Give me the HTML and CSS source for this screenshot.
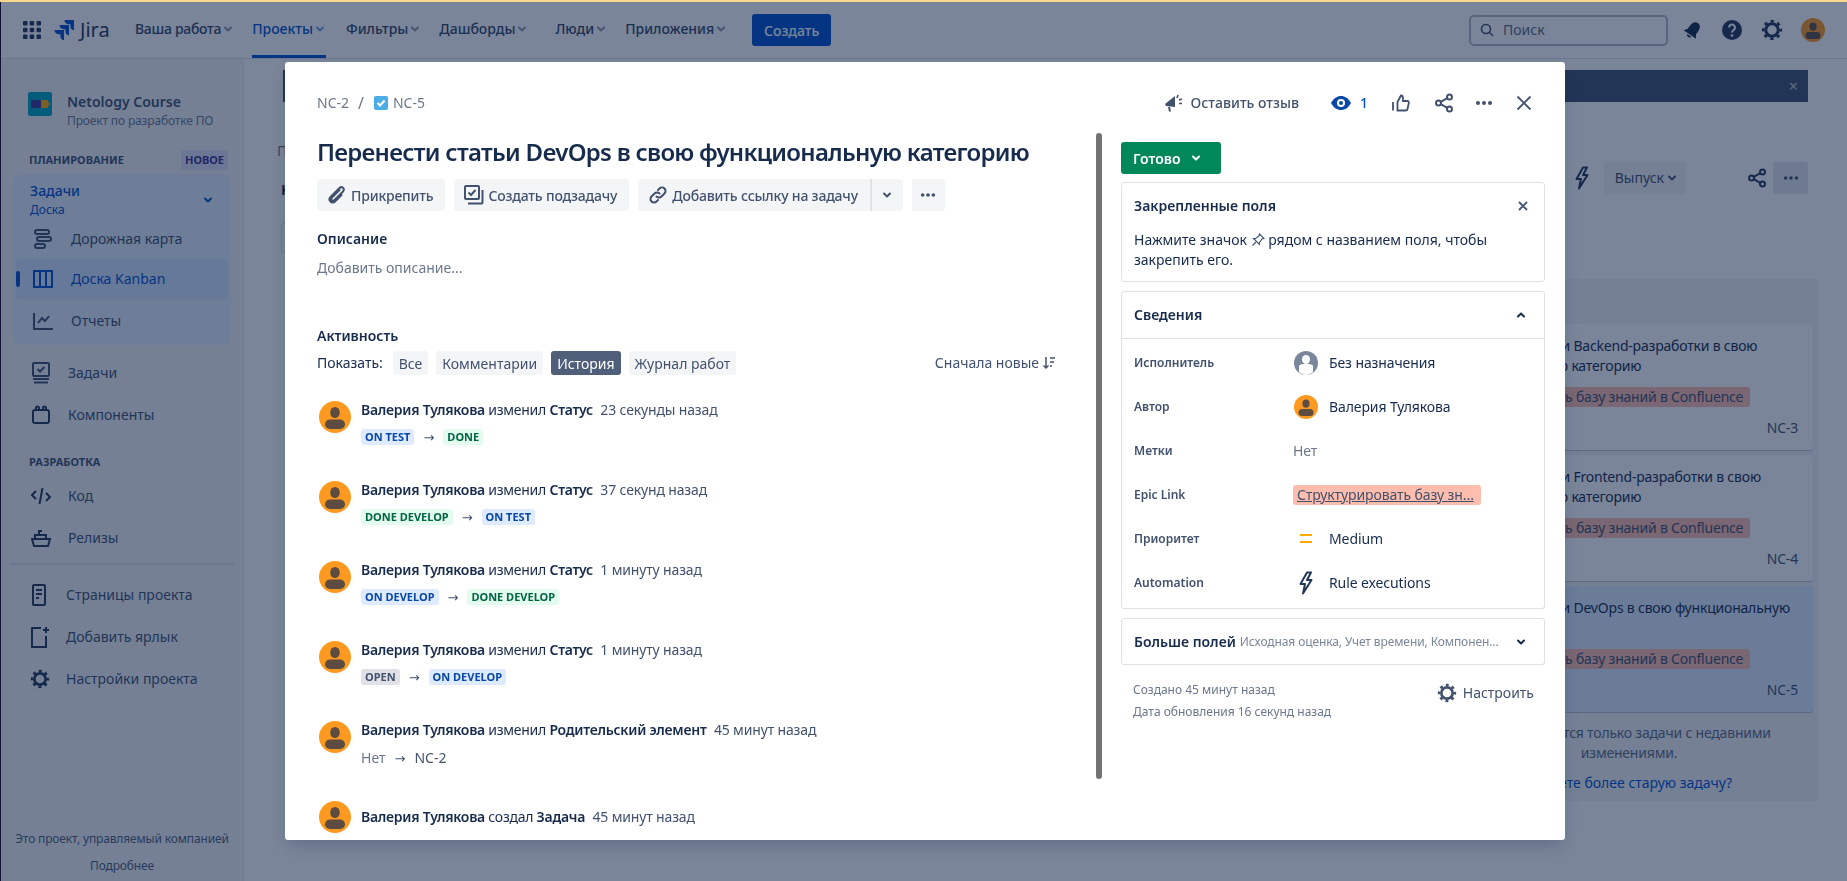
FILE: index.html
```html
<!DOCTYPE html>
<html lang="ru">
<head>
  <meta charset="UTF-8" />
  <title>NC-5 - Jira</title>
  <link rel="stylesheet" href="styles.css">
</head>
<body>
  <svg class="defs" width="0" height="0">
    <symbol id="chev" viewBox="0 0 12 12"><path d="M3 4.500 6 7.500 9 4.500" fill="none" stroke="currentColor" stroke-width="2" stroke-linecap="round" stroke-linejoin="round"/></symbol>
    <symbol id="gear" viewBox="0 0 24 24"><g fill="none" stroke="currentColor"><circle cx="12" cy="12" r="6.800" stroke-width="3.200"/><circle cx="12" cy="12" r="9.500" stroke-width="3" stroke-dasharray="3.500 3.960" stroke-dashoffset="1.750"/></g></symbol>
    <symbol id="share" viewBox="0 0 20 20"><g fill="none" stroke="currentColor" stroke-width="2"><circle cx="4.500" cy="10" r="2.500"/><circle cx="15.500" cy="4" r="2.500"/><circle cx="15.500" cy="16" r="2.500"/><path d="M6.800 8.800 13.200 5.200M6.800 11.200 13.200 14.800"/></g></symbol>
    <symbol id="dots" viewBox="0 0 20 20"><g fill="currentColor"><circle cx="4" cy="10" r="2"/><circle cx="10" cy="10" r="2"/><circle cx="16" cy="10" r="2"/></g></symbol>
    <symbol id="bolt" viewBox="0 0 20 24"><path d="M11 1.500 4.500 13H9L7 22.500 15.500 9H11L15 1.500Z" fill="none" stroke="currentColor" stroke-width="2" stroke-linejoin="round"/></symbol>
    <symbol id="ava" viewBox="0 0 32 32"><circle cx="16" cy="16" r="16" fill="#ff991f"/><ellipse cx="16" cy="11.500" rx="4.800" ry="5.500" fill="#5d4c42"/><rect x="6" y="18.500" width="20" height="9.500" rx="4.700" fill="#5d4c42"/></symbol>
  </svg>

  <header class="topbar">
    <svg class="tb-grid" width="18" height="18" viewBox="0 0 18 18" fill="#253858"><rect width="4.500" height="4.500" rx="1"/><rect x="6.700" width="4.500" height="4.500" rx="1"/><rect x="13.500" width="4.500" height="4.500" rx="1"/><rect y="6.700" width="4.500" height="4.500" rx="1"/><rect x="6.700" y="6.700" width="4.500" height="4.500" rx="1"/><rect x="13.500" y="6.700" width="4.500" height="4.500" rx="1"/><rect y="13.500" width="4.500" height="4.500" rx="1"/><rect x="6.700" y="13.500" width="4.500" height="4.500" rx="1"/><rect x="13.500" y="13.500" width="4.500" height="4.500" rx="1"/></svg>
    <div class="logo">
      <svg width="20" height="20" viewBox="0 0 20 20" fill="#0052cc"><path d="M20 0H10.500a4.300 4.300 0 0 0 4.300 4.300h1.600v1.600A4.300 4.300 0 0 0 20 10.200V0Z"/><path d="M15 5H5.500a4.300 4.300 0 0 0 4.300 4.300h1.600v1.600a4.300 4.300 0 0 0 3.600 4.300V5Z"/><path d="M10 10H0.500a4.300 4.300 0 0 0 4.300 4.300h1.600v1.600A4.300 4.300 0 0 0 10 20.200V10Z"/></svg>
      <span>Jira</span>
    </div>
    <nav class="tb-nav">
      <a class="tb-link">Ваша работа<svg width="12" height="12"><use href="#chev"/></svg></a>
      <a class="tb-link active">Проекты<svg width="12" height="12"><use href="#chev"/></svg></a>
      <a class="tb-link">Фильтры<svg width="12" height="12"><use href="#chev"/></svg></a>
      <a class="tb-link">Дашборды<svg width="12" height="12"><use href="#chev"/></svg></a>
      <a class="tb-link">Люди<svg width="12" height="12"><use href="#chev"/></svg></a>
      <a class="tb-link">Приложения<svg width="12" height="12"><use href="#chev"/></svg></a>
    </nav>
    <button class="create">Создать</button>
    <div class="tb-right">
      <div class="search">
        <svg width="14" height="14" viewBox="0 0 14 14" fill="none" stroke="#42526e" stroke-width="1.600"><circle cx="6" cy="6" r="4.500"/><path d="M9.500 9.500 13 13"/></svg>
        <span>Поиск</span>
      </div>
      <svg class="tb-ico" width="20" height="20" viewBox="0 0 20 20" fill="#172b4d"><g transform="rotate(35 10 10)"><path d="M10 1.500C6.500 1.500 5 4.500 5 8V12L2.500 15.500H17.500L15 12V8C15 4.500 13.500 1.500 10 1.500Z"/><path d="M7.500 16.500H12.500C12.500 19 7.500 19 7.500 16.500Z"/></g></svg>
      <svg class="tb-ico" width="22" height="22" viewBox="0 0 22 22"><circle cx="11" cy="11" r="10" fill="#253858"/><path d="M8 8.500a3 3 0 1 1 4.800 2.400c-1.200.9-1.800 1.300-1.800 2.600" fill="none" stroke="#fff" stroke-width="2"/><circle cx="11" cy="16.500" r="1.300" fill="#fff"/></svg>
      <svg class="tb-ico" width="22" height="22" color="#253858"><use href="#gear"/></svg>
      <svg class="tb-ava" width="24" height="24"><use href="#ava"/></svg>
    </div>
  </header>

  <div class="page">
    <aside class="sidebar">
      <div class="project">
        <svg width="24" height="24" viewBox="0 0 24 24"><rect width="24" height="24" rx="2" fill="#00a3bf"/><rect x="3" y="8" width="10" height="8" rx="1" fill="#403294"/><rect x="13" y="8" width="7" height="8" rx="1" fill="#ffab00"/><rect x="20" y="10.500" width="1.500" height="3" fill="#ffab00"/></svg>
        <div>
          <div class="project-name">Netology Course</div>
          <div class="project-type">Проект по разработке ПО</div>
        </div>
      </div>
      <div class="side-head">
        <span>ПЛАНИРОВАНИЕ</span><span class="badge-new">НОВОЕ</span>
      </div>
      <div class="side-group">
        <div class="group-top">
          <div>
            <div class="group-title">Задачи</div>
            <div class="group-sub">Доска</div>
          </div>
          <svg width="12" height="12"><use href="#chev"/></svg>
        </div>
        <a class="side-item sub">
          <svg width="20" height="22" viewBox="0 0 20 22" fill="none" stroke="#42526e" stroke-width="2"><rect x="2" y="2" width="14" height="4" rx="2"/><rect x="4" y="9" width="14" height="4" rx="2"/><rect x="2" y="16" width="10" height="4" rx="2"/></svg>
          <span>Дорожная карта</span>
        </a>
        <a class="side-item sub selected">
          <svg width="20" height="18" viewBox="0 0 20 18" fill="none" stroke="#0052cc" stroke-width="2"><rect x="1" y="1" width="18" height="16"/><path d="M7 1V17M13 1V17"/></svg>
          <span>Доска Kanban</span>
        </a>
        <a class="side-item sub">
          <svg width="20" height="18" viewBox="0 0 20 18" fill="none" stroke="#42526e" stroke-width="2"><path d="M1 1V17H20"/><path d="M5 11 9 6 12 9 16 4"/></svg>
          <span>Отчеты</span>
        </a>
      </div>
      <a class="side-item">
        <svg width="20" height="22" viewBox="0 0 20 22" fill="none" stroke="#42526e" stroke-width="2"><rect x="2" y="1" width="16" height="13" rx="1"/><path d="M6.500 7 9 9.500 13.500 5M2 17H18M3 20.500H17"/></svg>
        <span>Задачи</span>
      </a>
      <a class="side-item">
        <svg width="20" height="20" viewBox="0 0 20 20" fill="none" stroke="#253858" stroke-width="2"><rect x="2" y="5" width="16" height="13" rx="2"/><path d="M5 5V3a1 1 0 0 1 3 0V5M12 5V3a1 1 0 0 1 3 0V5"/></svg>
        <span>Компоненты</span>
      </a>
      <div class="side-head dev">РАЗРАБОТКА</div>
      <a class="side-item">
        <svg width="20" height="20" viewBox="0 0 20 20" fill="none" stroke="#253858" stroke-width="2"><path d="M5 5 1 9 5 13M15 7 19 11 15 15M11.500 2 8.500 18"/></svg>
        <span>Код</span>
      </a>
      <a class="side-item">
        <svg width="20" height="20" viewBox="0 0 20 20" fill="none" stroke="#253858" stroke-width="2"><path d="M1 11H19L17 18H3ZM4 11V7H15V11M8 7V3H11"/></svg>
        <span>Релизы</span>
      </a>
      <div class="side-sep"></div>
      <a class="side-item bottom">
        <svg width="20" height="22" viewBox="-2 0 20 22" fill="none" stroke="#253858" stroke-width="2"><rect x="1" y="1" width="12" height="20" rx="1"/><path d="M4 6H10M4 10H10M4 14H7"/></svg>
        <span>Страницы проекта</span>
      </a>
      <a class="side-item bottom">
        <svg width="20" height="22" viewBox="0 0 20 22" fill="none" stroke="#253858" stroke-width="2"><path d="M11 2H2V21H16V10"/><path d="M16 1V7M13 4H19"/></svg>
        <span>Добавить ярлык</span>
      </a>
      <a class="side-item bottom">
        <svg width="20" height="22" color="#253858"><use href="#gear"/></svg>
        <span>Настройки проекта</span>
      </a>
      <div class="side-foot">
        <div>Это проект, управляемый компанией</div>
        <div class="foot-more">Подробнее</div>
      </div>
    </aside>

    <main class="board">
      <div class="banner"><span>&times;</span></div>
      <div class="crumbs">Проекты</div>
      <div class="toolbar">
        <h1 class="board-title">Kanban</h1>
        <div class="toolbar-right">
          <svg width="20" height="24" color="#253858"><use href="#bolt"/></svg>
          <span class="release">Выпуск<svg width="12" height="12"><use href="#chev"/></svg></span>
          <svg class="board-share" width="20" height="20" color="#253858"><use href="#share"/></svg>
          <span class="board-more"><svg width="18" height="18"><use href="#dots"/></svg></span>
        </div>
      </div>
      <div class="filter-input"></div>
      <section class="column">
        <article class="card">
          <p>Перенести статьи Backend-разработки в свою функциональную категорию</p>
          <span class="epic">Структурировать базу знаний в Confluence</span>
          <div class="card-key">NC-3</div>
        </article>
        <article class="card">
          <p>Перенести статьи Frontend-разработки в свою функциональную категорию</p>
          <span class="epic">Структурировать базу знаний в Confluence</span>
          <div class="card-key">NC-4</div>
        </article>
        <article class="card current">
          <p>Перенести статьи DevOps в свою функциональную<br>категорию</p>
          <span class="epic">Структурировать базу знаний в Confluence</span>
          <div class="card-key">NC-5</div>
        </article>
        <div class="col-note">Показываются только задачи с недавними изменениями.</div>
        <a class="col-link">Ищете более старую задачу?</a>
      </section>
    </main>
  </div>

  <div class="blanket"></div>

  <div class="modal">
    <div class="modal-head">
      <div class="breadcrumb">
        <span>NC-2</span><span class="slash">/</span>
        <svg width="16" height="16" viewBox="0 0 16 16"><rect x="1" y="1" width="14" height="14" rx="2" fill="#4bade8"/><path d="M4.500 8 7 10.500 11.500 5.500" fill="none" stroke="#fff" stroke-width="2"/></svg>
        <span>NC-5</span>
      </div>
      <div class="head-actions">
        <span class="feedback">
          <svg width="20" height="20" viewBox="0 0 20 20" fill="#42526e"><path d="M1 11 11 3V14L2 13Z"/><path d="M5 14 6 18.500" stroke="#42526e" stroke-width="2"/><path d="M14 2 13 5M15 7 18 6M15 10.500 18 10.500" stroke="#42526e" stroke-width="1.600"/></svg>
          Оставить отзыв
        </span>
        <span class="watch">
          <svg width="20" height="14" viewBox="0 0 20 14"><path d="M0 7C3 2 6 0 10 0S17 2 20 7C17 12 14 14 10 14S3 12 0 7Z" fill="#0747a6"/><circle cx="10" cy="7" r="4" fill="#fff"/><circle cx="10" cy="7" r="2" fill="#0747a6"/></svg>
          <b>1</b>
        </span>
        <svg class="act-like" width="18" height="18" viewBox="0 0 18 18" fill="none" stroke="#42526e" stroke-width="1.800"><path d="M5.500 8 9 1.500C10.500 1.500 11 3 11 4.500V7H15.500C16.500 7 17 8 16.800 9L15.500 15C15.300 16 14.500 16.500 13.500 16.500H5.500ZM1 8V16.500"/></svg>
        <svg class="act-share" width="20" height="20" color="#42526e"><use href="#share"/></svg>
        <svg class="act-more" width="20" height="20" color="#42526e"><use href="#dots"/></svg>
        <svg class="act-close" width="16" height="16" viewBox="0 0 16 16" stroke="#42526e" stroke-width="1.800"><path d="M1.500 1.500 14.500 14.500M14.500 1.500 1.500 14.500"/></svg>
      </div>
    </div>

    <div class="modal-body">
      <div class="issue">
        <h1 class="issue-title">Перенести статьи DevOps в свою функциональную категорию</h1>
        <div class="issue-actions">
          <button class="btn">
            <svg width="20" height="20" viewBox="0 0 20 20" fill="none" stroke="#42526e" stroke-width="2" stroke-linecap="round"><path d="M12.500 5 5 12.500C3 14.500 5.500 17 7.500 15L16 6.500C18.500 4 15 0.500 12.500 3L3.500 12C0.500 15 5 19.500 8 16.500L14.500 10"/></svg>
            Прикрепить
          </button>
          <button class="btn">
            <svg width="20" height="20" viewBox="0 0 20 20" fill="none" stroke="#42526e" stroke-width="2"><rect x="1" y="1" width="14" height="13" rx="1"/><path d="M4.500 7.500 7 10 11.500 5"/><path d="M18.500 5V17.500a1 1 0 0 1-1 1H4"/></svg>
            Создать подзадачу
          </button>
          <div class="btn-split">
            <button class="btn">
              <svg width="20" height="20" viewBox="0 0 20 20" fill="none" stroke="#42526e" stroke-width="2" stroke-linecap="round"><path d="M8.500 11.500a3.500 3.500 0 0 0 5 0l3-3a3.500 3.500 0 0 0-5-5l-1.500 1.500"/><path d="M11.500 8.500a3.500 3.500 0 0 0-5 0l-3 3a3.500 3.500 0 0 0 5 5l1.500-1.500"/></svg>
              Добавить ссылку на задачу
            </button>
            <button class="btn btn-caret"><svg width="12" height="12"><use href="#chev"/></svg></button>
          </div>
          <button class="btn btn-more"><svg width="18" height="18"><use href="#dots"/></svg></button>
        </div>

        <h2 class="sec-title">Описание</h2>
        <p class="placeholder">Добавить описание...</p>

        <h2 class="sec-title activity">Активность</h2>
        <div class="activity-bar">
          <span class="show-label">Показать:</span>
          <button class="chip">Все</button>
          <button class="chip">Комментарии</button>
          <button class="chip on">История</button>
          <button class="chip">Журнал работ</button>
          <span class="sort">Сначала новые
            <svg width="14" height="14" viewBox="0 0 14 14" fill="none" stroke="#42526e" stroke-width="1.500"><path d="M4 1V12M1.500 9.500 4 12 6.500 9.500M8 2H13M8 6H12M8 10H10"/></svg>
          </span>
        </div>

        <div class="entry">
          <svg class="entry-ava" width="32" height="32"><use href="#ava"/></svg>
          <div>
            <div class="entry-line"><b>Валерия Тулякова</b> изменил <b>Статус</b> <time>23 секунды назад</time></div>
            <div class="entry-change"><span class="loz blue">ON TEST</span><i>→</i><span class="loz green">DONE</span></div>
          </div>
        </div>
        <div class="entry">
          <svg class="entry-ava" width="32" height="32"><use href="#ava"/></svg>
          <div>
            <div class="entry-line"><b>Валерия Тулякова</b> изменил <b>Статус</b> <time>37 секунд назад</time></div>
            <div class="entry-change"><span class="loz green">DONE DEVELOP</span><i>→</i><span class="loz blue">ON TEST</span></div>
          </div>
        </div>
        <div class="entry">
          <svg class="entry-ava" width="32" height="32"><use href="#ava"/></svg>
          <div>
            <div class="entry-line"><b>Валерия Тулякова</b> изменил <b>Статус</b> <time>1 минуту назад</time></div>
            <div class="entry-change"><span class="loz blue">ON DEVELOP</span><i>→</i><span class="loz green">DONE DEVELOP</span></div>
          </div>
        </div>
        <div class="entry">
          <svg class="entry-ava" width="32" height="32"><use href="#ava"/></svg>
          <div>
            <div class="entry-line"><b>Валерия Тулякова</b> изменил <b>Статус</b> <time>1 минуту назад</time></div>
            <div class="entry-change"><span class="loz gray">OPEN</span><i>→</i><span class="loz blue">ON DEVELOP</span></div>
          </div>
        </div>
        <div class="entry">
          <svg class="entry-ava" width="32" height="32"><use href="#ava"/></svg>
          <div>
            <div class="entry-line"><b>Валерия Тулякова</b> изменил <b>Родительский элемент</b> <time>45 минут назад</time></div>
            <div class="entry-change plain"><span class="none">Нет</span><i>→</i><span>NC-2</span></div>
          </div>
        </div>
        <div class="entry">
          <svg class="entry-ava" width="32" height="32"><use href="#ava"/></svg>
          <div>
            <div class="entry-line last"><b>Валерия Тулякова</b> создал <b>Задача</b> <time>45 минут назад</time></div>
          </div>
        </div>
      </div>

      <div class="scrollbar"></div>

      <div class="details">
        <button class="status">Готово<svg width="12" height="12"><use href="#chev"/></svg></button>

        <div class="panel pinned">
          <div class="pinned-head">
            <strong>Закрепленные поля</strong>
            <svg width="10" height="10" viewBox="0 0 10 10" stroke="#42526e" stroke-width="1.800"><path d="M1 1 9 9M9 1 1 9"/></svg>
          </div>
          <p>Нажмите значок
            <svg width="14" height="14" viewBox="0 0 14 14" fill="none" stroke="#42526e" stroke-width="1.100"><path d="M8.500 1 13 5.500 11 6 8.500 9.500 8.500 11.500 2.500 5.500 4.500 5.500 8 3Z"/><path d="M5 9 1.500 12.500"/></svg>
            рядом с названием поля, чтобы закрепить его.</p>
        </div>

        <div class="panel">
          <div class="panel-head">
            <strong>Сведения</strong>
            <svg width="12" height="12" class="flip"><use href="#chev"/></svg>
          </div>
          <div class="field-list">
            <div class="field">
              <span class="field-name">Исполнитель</span>
              <div class="field-val">
                <svg width="24" height="24" viewBox="0 0 24 24"><circle cx="12" cy="12" r="12" fill="#7a869a"/><ellipse cx="12" cy="8.500" rx="4" ry="4.500" fill="#fff"/><path d="M5 15.500C5 13.500 8 13 12 13S19 13.500 19 15.500V21C17 23 14 24 12 24S7 23 5 21Z" fill="#fff"/></svg>
                <span>Без назначения</span>
              </div>
            </div>
            <div class="field">
              <span class="field-name">Автор</span>
              <div class="field-val">
                <svg width="24" height="24"><use href="#ava"/></svg>
                <span>Валерия Тулякова</span>
              </div>
            </div>
            <div class="field">
              <span class="field-name">Метки</span>
              <div class="field-val"><span class="muted">Нет</span></div>
            </div>
            <div class="field">
              <span class="field-name">Epic Link</span>
              <div class="field-val"><a class="epic-link">Структурировать базу зн...</a></div>
            </div>
            <div class="field">
              <span class="field-name">Приоритет</span>
              <div class="field-val">
                <svg width="24" height="24" viewBox="0 0 24 24" fill="#ffab00"><rect x="6" y="7" width="12" height="2"/><rect x="6" y="14" width="12" height="2"/></svg>
                <span>Medium</span>
              </div>
            </div>
            <div class="field">
              <span class="field-name">Automation</span>
              <div class="field-val">
                <svg width="24" height="24" color="#253858"><use href="#bolt"/></svg>
                <span>Rule executions</span>
              </div>
            </div>
          </div>
        </div>

        <div class="panel more-fields">
          <strong>Больше полей</strong>
          <span class="more-list">Исходная оценка, Учет времени, Компонен...</span>
          <svg width="12" height="12"><use href="#chev"/></svg>
        </div>

        <div class="meta">
          <div class="dates">
            <div>Создано 45 минут назад</div>
            <div>Дата обновления 16 секунд назад</div>
          </div>
          <span class="configure"><svg width="20" height="20"><use href="#gear"/></svg>Настроить</span>
        </div>
      </div>
    </div>
  </div>
</body>
</html>
```

FILE: styles.css
```css
html {
  box-sizing: border-box;
}
*, *:before, *:after {
  box-sizing: inherit;
}

body {
  margin: 0;
  height: 881px;
  overflow: hidden;
  position: relative;
  background: #fff;
  border-top: 2px solid #fff;
  border-left: 1px solid #1a0a20;
  font-family: "Noto Sans", sans-serif;
  font-size: 14px;
  line-height: 20px;
  color: #172b4d;
}
/* strip of the window above the page */
body:before {
  content: "";
  position: fixed;
  z-index: 5;
  left: 0;
  right: 0;
  top: 0;
  height: 2px;
  background: #f9d98c;
}

.defs {
  position: absolute;
}

svg {
  flex: none;
}

/* Top bar */
.topbar {
  display: flex;
  align-items: center;
  height: 57px;
  padding-left: 22px;
  border-bottom: 1px solid #dfe1e6;
}
.tb-grid {
  margin-right: 13px;
}
.logo {
  display: flex;
  align-items: center;
  gap: 6px;
  width: 81px;
  font-size: 20px;
  color: #253858;
}
.tb-nav {
  display: flex;
  gap: 18px;
  height: 100%;
}
.tb-link {
  display: flex;
  align-items: center;
  gap: 1px;
  height: 100%;
  border-bottom: 3px solid transparent;
  color: #344563;
  font-weight: 500;
  position: relative;
}
.tb-link svg {
  opacity: 0.55;
}
.tb-link:nth-child(1) {
  letter-spacing: -0.3px;
}
.tb-link:nth-child(2) {
  margin-right: 2px;
}
.tb-link:nth-child(4) {
  margin-right: 9px;
}
.tb-link.active {
  color: #0052cc;
  border-bottom-color: #0052cc;
}
.create {
  margin-left: 25px;
  width: 79px;
  height: 32px;
  border: none;
  border-radius: 3px;
  background: #0052cc;
  color: #fff;
  font: 500 14px "Noto Sans", sans-serif;
}
.tb-right {
  margin-left: auto;
  display: flex;
  align-items: center;
  padding-right: 22px;
}
.search {
  display: flex;
  align-items: center;
  gap: 9px;
  width: 199px;
  height: 31px;
  padding-left: 9px;
  margin-right: 6px;
  border: 2px solid #b3bac5;
  border-radius: 5px;
  color: #5e6c84;
}
.tb-ico {
  margin: 0 9px;
}
.tb-ava {
  margin-left: 9px;
}

/* Sidebar */
.page {
  display: flex;
  height: 822px;
}
.sidebar {
  width: 243px;
  flex: none;
  padding: 0 12px;
  background: #f4f5f7;
  border-right: 1px solid #ebecf0;
  position: relative;
  color: #42526e;
}
.project {
  display: flex;
  gap: 15px;
  padding: 33px 0 0 15px;
  font-size: 12px;
}
.project-name {
  font-size: 14px;
  font-weight: 600;
  color: #42526e;
}
.project-type {
  font-size: 12px;
  color: #6b778c;
  line-height: 18px;
  letter-spacing: -0.15px;
}
.side-head {
  display: flex;
  align-items: center;
  justify-content: space-between;
  margin: 22px 3px 6px 16px;
  height: 16px;
  font-size: 11px;
  font-weight: 700;
  color: #42526e;
}
.side-head.dev {
  margin: 19px 0 6px 16px;
}
.badge-new {
  padding: 0 4px;
  border-radius: 3px;
  background: #dfe1f5;
  color: #403294;
  font-size: 11px;
}
.side-group {
  height: 171px;
  margin-bottom: 8px;
  padding: 6px 3px 0;
  border-radius: 8px;
  background: #e4eefd;
}
.group-top {
  display: flex;
  align-items: center;
  justify-content: space-between;
  padding: 0 14px;
  height: 39px;
  color: #0052cc;
}
.group-title {
  font-weight: 500;
}
.group-sub {
  font-size: 12px;
  line-height: 18px;
}
.side-item {
  display: flex;
  align-items: center;
  gap: 17px;
  height: 40px;
  padding-left: 18px;
  border-radius: 4px;
  margin-bottom: 2px;
}
.side-item.sub {
  gap: 18px;
  padding-left: 17px;
  margin-bottom: 0;
}
.side-item.selected {
  background: #d4e5ff;
  color: #0052cc;
  position: relative;
  margin-bottom: 2px;
}
.side-item.selected:before {
  content: "";
  position: absolute;
  left: 0;
  top: 12px;
  width: 4px;
  height: 16px;
  border-radius: 2px;
  background: #0052cc;
}
.side-sep {
  height: 2px;
  margin: 5px -3px 10px;
  background: #dfe1e6;
}
.side-item.bottom {
  gap: 16px;
  padding-left: 17px;
}
.side-foot {
  position: absolute;
  left: 0;
  right: 0;
  bottom: 5px;
  text-align: center;
  font-size: 12px;
  color: #505f79;
  letter-spacing: -0.15px;
}
.foot-more {
  margin-top: 7px;
}

/* Board behind the modal */
.board {
  flex: 1;
  padding: 11px 30px 0 33px;
  overflow: hidden;
}
.banner {
  display: flex;
  align-items: center;
  justify-content: flex-end;
  height: 32px;
  margin: 0 9px 0 6px;
  padding-right: 10px;
  background: #42526e;
  color: #c1c7d0;
  font-size: 16px;
}
.crumbs {
  margin-top: 39px;
  color: #6b778c;
}
.toolbar {
  display: flex;
  justify-content: space-between;
  height: 32px;
  margin-top: 1px;
}
.board-title {
  margin: 18px 0 0 4px;
  font-size: 14px;
  line-height: 20px;
  font-weight: 700;
}
.toolbar-right {
  display: flex;
  align-items: center;
  color: #42526e;
  padding-right: 9px;
}
.release {
  display: flex;
  align-items: center;
  gap: 2px;
  height: 32px;
  margin-left: 12px;
  padding: 0 8px 0 11px;
  border-radius: 3px;
  background: #f4f5f7;
}
.board-share {
  margin-left: 61px;
  margin-right: 6px;
}
.board-more {
  display: flex;
  align-items: center;
  justify-content: center;
  width: 35px;
  height: 32px;
  border-radius: 3px;
  background: #e5e7eb;
}
.filter-input {
  width: 100px;
  height: 30px;
  margin: 29px 0 0 4px;
  border: 1px solid #dfe1e6;
  border-radius: 3px;
}
.column {
  margin: 26px -1px 0 auto;
  width: 380px;
  height: 522px;
  padding: 45px 5px 0;
  border-radius: 3px;
  background: #f4f5f7;
}
.card {
  height: 126px;
  margin-bottom: 5px;
  padding: 12px 15px 0 10px;
  background: #fff;
  border-radius: 3px;
  box-shadow: 0 1px 1px rgba(9, 30, 66, 0.25);
  letter-spacing: -0.2px;
}
.card.current {
  background: #deebff;
}
.card p {
  margin: 0 0 11px;
}
.epic {
  display: inline-block;
  padding: 0 7px;
  border-radius: 3px;
  background: #ffbdad;
  color: #42526e;
}
.card-key {
  margin-top: 11px;
  text-align: right;
  color: #42526e;
}
.col-note {
  margin-top: 11px;
  padding: 0 26px 0 28px;
  text-align: center;
  color: #5e6c84;
  letter-spacing: -0.2px;
}
.col-link {
  display: block;
  margin-top: 10px;
  padding-left: 12px;
  text-align: center;
  color: #0052cc;
}

.blanket {
  position: fixed;
  inset: 0;
  background: rgba(9, 30, 66, 0.54);
}

/* Issue modal */
.modal {
  position: fixed;
  left: 285px;
  top: 62px;
  width: 1280px;
  height: 778px;
  overflow: hidden;
  border-radius: 3px;
  background: #fff;
  box-shadow: 0 8px 16px -4px rgba(9, 30, 66, 0.25);
}
.modal-head {
  display: flex;
  align-items: center;
  justify-content: space-between;
  height: 50px;
  margin-top: 16px;
  padding: 0 33px 0 32px;
}
.breadcrumb {
  display: flex;
  align-items: center;
  gap: 4px;
  color: #6b778c;
}
.slash {
  margin: 0 5px;
  font-size: 16px;
}
.head-actions {
  display: flex;
  align-items: center;
  color: #42526e;
}
.feedback {
  display: flex;
  align-items: center;
  gap: 7px;
  font-weight: 500;
}
.watch {
  display: flex;
  align-items: center;
  gap: 9px;
  margin-left: 32px;
  color: #0052cc;
}
.watch b {
  font-weight: 500;
}
.act-like {
  margin-left: 24px;
}
.act-share {
  margin-left: 24px;
}
.act-more {
  margin-left: 20px;
}
.act-close {
  margin-left: 22px;
}
.modal-body {
  display: flex;
  height: 712px;
  padding-top: 5px;
}
.issue {
  width: 810px;
  flex: none;
  padding-left: 32px;
  padding-right: 39px;
}
.issue-title {
  margin: 3px 0 0;
  font-size: 24px;
  line-height: 32px;
  font-weight: 600;
  letter-spacing: -0.72px;
  white-space: nowrap;
}
.issue-actions {
  display: flex;
  gap: 9px;
  margin-top: 11px;
}
.btn {
  display: flex;
  align-items: center;
  gap: 4px;
  height: 32px;
  padding: 0 12px 0 10px;
  border: none;
  border-radius: 3px;
  background: #f4f5f7;
  color: #42526e;
  font: 500 14px "Noto Sans", sans-serif;
  letter-spacing: -0.18px;
  white-space: nowrap;
}
.btn-split {
  display: flex;
}
.btn-split .btn:first-child {
  border-radius: 3px 0 0 3px;
}
.btn-caret {
  width: 33px;
  padding: 0;
  justify-content: center;
  border-radius: 0 3px 3px 0;
  border-left: 2px solid #dfe1e6;
}
.btn-more {
  width: 33px;
  padding: 0;
  justify-content: center;
}
.sec-title {
  margin: 18px 0 0;
  font-size: 14px;
  line-height: 20px;
  font-weight: 600;
}
.sec-title.activity {
  margin-top: 48px;
}
.placeholder {
  margin: 9px 0 0;
  color: #6b778c;
}
.activity-bar {
  display: flex;
  align-items: center;
  gap: 8px;
  margin-top: 5px;
  height: 24px;
}
.show-label {
  margin-right: 2px;
}
.chip {
  height: 24px;
  padding: 0 6px;
  border: none;
  border-radius: 3px;
  background: #f4f5f7;
  color: #42526e;
  font: 14px "Noto Sans", sans-serif;
}
.chip.on {
  background: #505f79;
  color: #fff;
}
.sort {
  display: flex;
  align-items: center;
  gap: 3px;
  margin-left: auto;
  color: #42526e;
}
.entry {
  display: flex;
  gap: 10px;
  height: 80px;
  padding-left: 2px;
}
.activity-bar + .entry {
  margin-top: 26px;
}
.entry-line {
  margin-top: -1px;
  letter-spacing: -0.26px;
  white-space: nowrap;
}
.entry-line b {
  font-weight: 600;
}
.entry-line time {
  margin-left: 4px;
  color: #42526e;
  letter-spacing: -0.15px;
}
.entry-line.last {
  margin-top: 6px;
}
.entry-change {
  display: flex;
  align-items: center;
  margin-top: 9px;
  height: 16px;
  color: #42526e;
}
.entry-change i {
  font: 13px "DejaVu Sans", sans-serif;
  margin: 0 9px;
}
.entry-change.plain {
  margin-top: 10px;
}
.none {
  color: #6b778c;
}
.loz {
  padding: 0 4px;
  border-radius: 3px;
  font-size: 11px;
  line-height: 16px;
  font-weight: 700;
}
.loz.blue {
  background: #deebff;
  color: #0747a6;
}
.loz.green {
  background: #e3fcef;
  color: #006644;
}
.loz.gray {
  background: #dfe1e6;
  color: #42526e;
}
.scrollbar {
  width: 6px;
  height: 646px;
  margin-left: 1px;
  border-radius: 3px;
  background: #737373;
  flex: none;
}

/* Right column */
.details {
  width: 424px;
  margin-left: 19px;
  flex: none;
  padding-top: 9px;
}
.status {
  display: flex;
  align-items: center;
  gap: 10px;
  width: 100px;
  height: 32px;
  padding: 0 0 0 12px;
  border: none;
  border-radius: 3px;
  background: #00875a;
  color: #fff;
  font: 600 14px "Noto Sans", sans-serif;
}
.panel {
  margin-top: 9px;
  border: 1px solid #dfe1e6;
  border-radius: 3px;
}
.status + .panel {
  margin-top: 8px;
}
.pinned {
  height: 100px;
  padding: 13px 12px;
}
.pinned-head {
  display: flex;
  align-items: center;
  justify-content: space-between;
  padding-right: 4px;
}
.panel strong {
  font-weight: 600;
}
.pinned p {
  margin: 14px 0 0;
}
.pinned p svg {
  vertical-align: -2px;
}
.panel-head {
  display: flex;
  align-items: center;
  justify-content: space-between;
  height: 47px;
  padding: 0 12px;
  border-bottom: 1px solid #dfe1e6;
}
.panel-head .flip {
  transform: rotate(180deg);
  margin-right: 5px;
}
.field-list {
  padding: 2px 0 3px;
}
.field {
  display: flex;
  align-items: center;
  height: 44px;
  padding-left: 12px;
}
.field-name {
  width: 159px;
  font-size: 12px;
  font-weight: 600;
  color: #42526e;
}
.field-val {
  display: flex;
  align-items: center;
  gap: 11px;
  letter-spacing: -0.1px;
}
.field-val svg {
  margin-left: 1px;
}
.muted {
  color: #6b778c;
}
.epic-link {
  display: block;
  width: 188px;
  padding: 0 4px;
  border-radius: 3px;
  background: #ffbdad;
  color: #42526e;
  text-decoration: underline;
  white-space: nowrap;
}
.more-fields {
  display: flex;
  align-items: center;
  gap: 4px;
  height: 47px;
  padding: 0 17px 0 12px;
}
.more-list {
  flex: 1;
  font-size: 12px;
  color: #7a869a;
  letter-spacing: -0.1px;
  white-space: nowrap;
}
.meta {
  display: flex;
  justify-content: space-between;
  margin-top: 14px;
  padding: 0 11px 0 12px;
  font-size: 12px;
  line-height: 22px;
  color: #6b778c;
}
.configure {
  display: flex;
  align-items: center;
  gap: 6px;
  height: 28px;
  font-size: 14px;
  color: #42526e;
}
```
